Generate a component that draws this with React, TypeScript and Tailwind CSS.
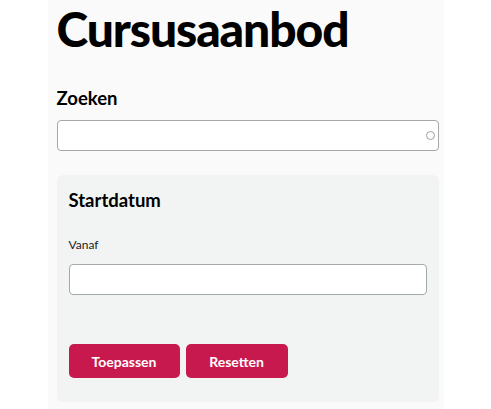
export default function App() {
  return (
    <div className="flex min-h-[409px] justify-center bg-white">
      <div className="w-[396px] bg-[#fafafa] pl-[9px] pr-[5px] pb-[7px] font-['Lato',sans-serif] text-black">
        <h1 className="pt-[3px] text-[48px] font-black leading-[52px] tracking-[-1.1px]">Cursusaanbod</h1>

        <label className="mt-[31px] block text-[18.5px] font-bold leading-[24px]">Zoeken</label>
        <div className="relative mt-[10px]">
          <input className="h-[31px] w-full rounded-[4px] border border-[#a3a9ab] bg-white px-2 outline-none" />
          <span className="absolute right-[4px] top-[11px] h-[9px] w-[9px] rounded-full border-[1.5px] border-[#a0a0a0]" />
        </div>

        <div className="mt-[24px] rounded-[6px] bg-[#f2f4f3] px-[12px] pb-[24px] pt-[13px]">
          <h2 className="text-[18.5px] font-bold leading-[24px]">Startdatum</h2>
          <label className="mt-[25px] block text-[12px] leading-[16px] text-[#222]">Vanaf</label>
          <input className="mt-[11px] h-[31px] w-full rounded-[4px] border border-[#a3a9ab] bg-white px-2 outline-none" />
          <div className="mt-[49px] flex gap-[6px]">
            <button className="h-[34px] w-[111px] rounded-[5px] bg-[#c8194f] text-[14px] font-bold text-white">Toepassen</button>
            <button className="h-[34px] w-[102px] rounded-[5px] bg-[#c8194f] text-[14px] font-bold text-white">Resetten</button>
          </div>
        </div>
      </div>
    </div>
  );
}
